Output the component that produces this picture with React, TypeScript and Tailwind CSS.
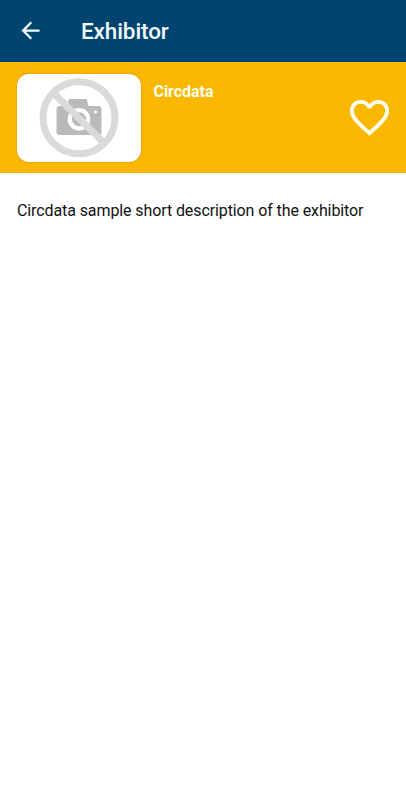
const BackIcon = () => (
  <svg viewBox="0 0 24 24" className="mb-0.5 size-[27px] fill-[#f4fbff]">
    <path d="M20 11H7.83l5.59-5.59L12 4l-8 8 8 8 1.41-1.41L7.83 13H20v-2z" />
  </svg>
);

const HeartIcon = () => (
  <svg viewBox="0 0 24 24" className="size-[47px] fill-[#fffff0]">
    <path d="M16.5 3c-1.74 0-3.41.81-4.5 2.09C10.91 3.81 9.24 3 7.5 3 4.42 3 2 5.42 2 8.5c0 3.78 3.4 6.86 8.55 11.54L12 21.35l1.45-1.32C18.6 15.36 22 12.28 22 8.5 22 5.42 19.58 3 16.5 3zm-4.4 15.55l-.1.1-.1-.1C7.14 14.24 4 11.39 4 8.5 4 6.5 5.5 5 7.5 5c1.54 0 3.04.99 3.57 2.36h1.87C13.46 5.99 14.96 5 16.5 5c2 0 3.5 1.5 3.5 3.5 0 2.89-3.14 5.74-7.9 10.05z" />
  </svg>
);

const NoImage = () => (
  <svg viewBox="0 0 124 88" className="h-[88px] w-[124px]">
    <path
      d="M51.5 26.2Q51.8 25 53 25h15.500q1.200 0 1.500 1.200L71.500 32H81.500q3 0 3 3v23q0 3-3 3h-39q-3 0-3-3V35q0-3 3-3h7.700z"
      fill="#bababa"
    />
    <circle cx="62" cy="45.300" r="9.200" fill="none" stroke="#fff" strokeWidth="4.300" />
    <circle cx="78.500" cy="38" r="1.600" fill="#fff" />
    <path d="M35 17.500l53.500 53" stroke="#dadada" strokeWidth="7" />
    <circle cx="62" cy="43.700" r="36" fill="none" stroke="#dadada" strokeWidth="7" />
  </svg>
);

export default function App() {
  return (
    <div className="min-h-screen bg-white font-[Roboto,sans-serif]">
      <header className="flex h-[62px] items-center bg-[#004570] pl-[17px]">
        <BackIcon />
        <h1 className="ml-[37px] text-[22.500px] leading-7 font-medium tracking-[-0.1px] text-[#f4fbff]">
          Exhibitor
        </h1>
      </header>
      <section className="flex h-[111px] items-start bg-[#fab700] pt-3 pr-[13px] pl-[17px]">
        <div className="h-[88px] w-[124px] rounded-[12px] bg-white shadow-[0_0_2px_rgba(90,70,0,0.35)]">
          <NoImage />
        </div>
        <h2 className="mt-1.5 ml-[12.500px] flex-1 text-[16px] leading-6 font-bold tracking-[-0.05px] text-[#fffff0]">
          Circdata
        </h2>
        <div className="mt-5">
          <HeartIcon />
        </div>
      </section>
      <p className="px-[17px] pt-[26px] text-[16px] leading-6 tracking-[-0.1px] text-[#111]">
        Circdata sample short description of the exhibitor
      </p>
    </div>
  );
}
